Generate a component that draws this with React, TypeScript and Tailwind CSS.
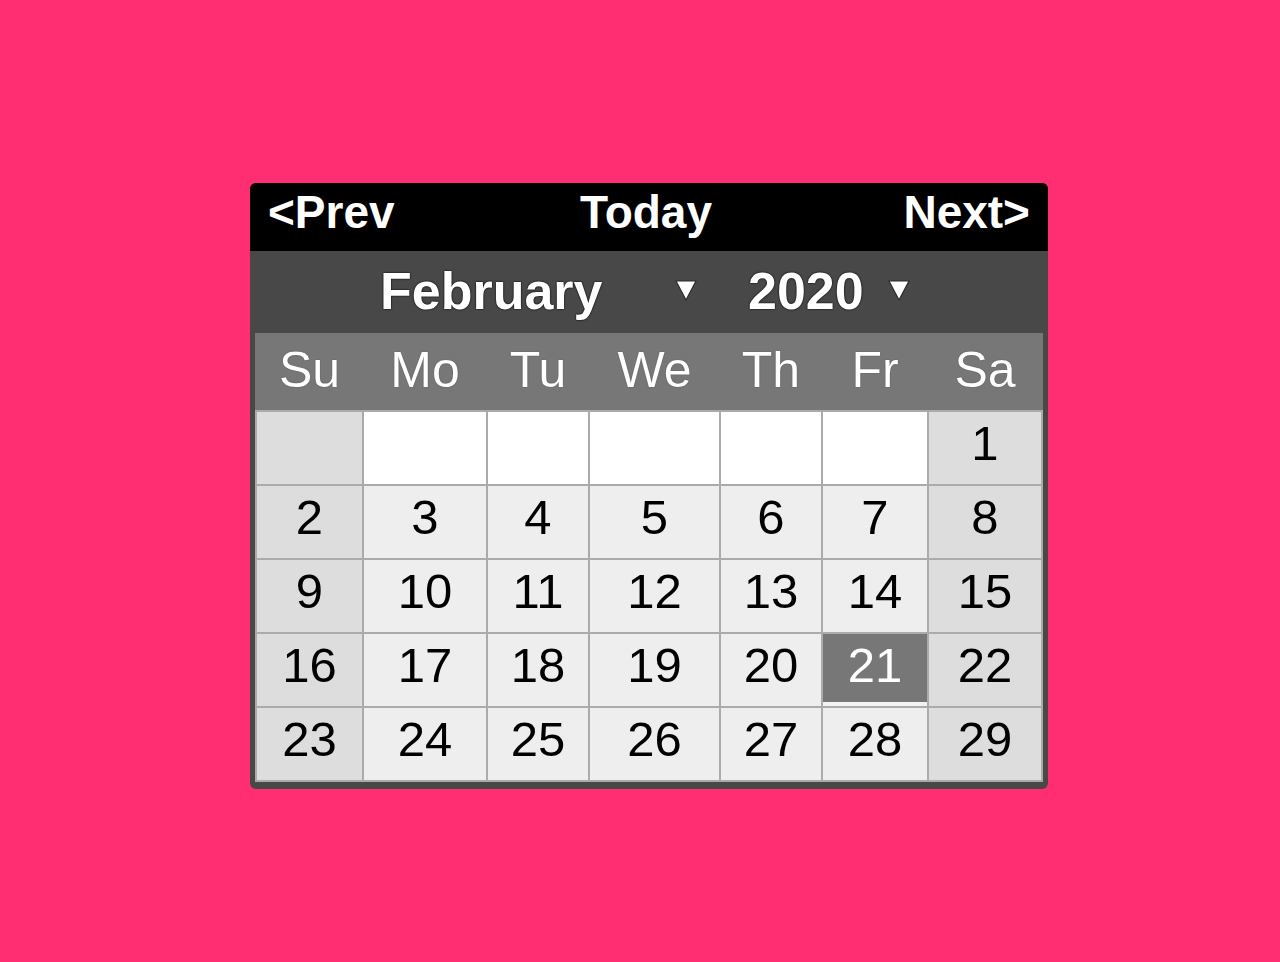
import React from "react";

const FONT = "font-['Liberation_Sans',Arial,Helvetica,sans-serif]";

// column widths of the day grid, Sunday..Saturday
const COLS = "grid-cols-[105px_122px_100px_129px_100px_104px_112px]";

const DAYS = ["Su", "Mo", "Tu", "We", "Th", "Fr", "Sa"];

type Cell = { day: number | null; col: number };

function buildWeeks(): Cell[][] {
  // February 2020 starts on a Saturday and has 29 days
  const first = 6;
  const total = 29;
  const cells: Cell[] = [];
  for (let i = 0; i < first; i++) cells.push({ day: null, col: i });
  for (let d = 1; d <= total; d++) cells.push({ day: d, col: (first + d - 1) % 7 });
  while (cells.length % 7 !== 0) cells.push({ day: null, col: cells.length % 7 });
  const weeks: Cell[][] = [];
  for (let i = 0; i < cells.length; i += 7) weeks.push(cells.slice(i, i + 7));
  return weeks;
}

function Caret() {
  return (
    <svg width="24" height="24" viewBox="0 0 24 24" className="shrink-0 mb-[2px]">
      <polygon points="2,3 22,3 12,22" fill="#ffffff" stroke="#2a2a2a" strokeWidth="1.2" strokeLinejoin="round" />
    </svg>
  );
}

function DayCell({ cell, selected }: { cell: Cell; selected: boolean }) {
  const weekend = cell.col === 0 || cell.col === 6;
  let bg = "bg-[#eeeeee]";
  if (weekend) bg = "bg-[#dddddd]";
  else if (cell.day === null) bg = "bg-white";

  if (selected) {
    return (
      <div className="h-[72px] bg-[#f2f2f2] flex flex-col">
        <div className="h-[68px] bg-[#777777] flex items-center justify-center text-white text-[49px] leading-none pb-[6px]">
          {cell.day}
        </div>
      </div>
    );
  }

  return (
    <div className={`h-[72px] ${bg} flex items-center justify-center text-black text-[49px] leading-none pb-[10px]`}>
      {cell.day ?? ""}
    </div>
  );
}

export default function App() {
  const weeks = buildWeeks();
  const shadow = "[text-shadow:0_0_2px_#000,0_0_1px_#000]";

  return (
    <div className={`min-h-[962px] w-full bg-[#ff2d71] pt-[183px] pl-[250px] ${FONT}`}>
      <div className="w-[798px] rounded-[6px] bg-[#484848] overflow-hidden">
        {/* navigation bar */}
        <div className={`h-[68px] bg-black flex items-center justify-between pl-[18px] pr-[18px] pb-[10px] text-white font-bold text-[46px] leading-none ${shadow}`}>
          <span>&lt;Prev</span>
          <span className="mr-[6px]">Today</span>
          <span>Next&gt;</span>
        </div>

        {/* month / year pickers */}
        <div className={`h-[82px] flex items-center pb-[2px] text-white font-bold text-[52px] leading-none ${shadow}`}>
          <span className="ml-[130px] w-[294px]">February</span>
          <Caret />
          <span className="ml-[50px] w-[139px]">2020</span>
          <Caret />
        </div>

        <div className="px-[5px] pb-[7px]">
          {/* weekday header */}
          <div className={`grid ${COLS} gap-x-[2px] px-[2px] h-[77px] bg-[#777777]`}>
            {DAYS.map((d) => (
              <div
                key={d}
                className="flex items-center justify-center text-white text-[50px] leading-none pb-[4px] [text-shadow:0_0_1px_#333]"
              >
                {d}
              </div>
            ))}
          </div>

          {/* days */}
          <div className={`grid ${COLS} gap-[2px] p-[2px] bg-[#ababab]`}>
            {weeks.map((week, wi) =>
              week.map((cell) => (
                <DayCell key={`${wi}-${cell.col}`} cell={cell} selected={cell.day === 21} />
              ))
            )}
          </div>
        </div>
      </div>
    </div>
  );
}
